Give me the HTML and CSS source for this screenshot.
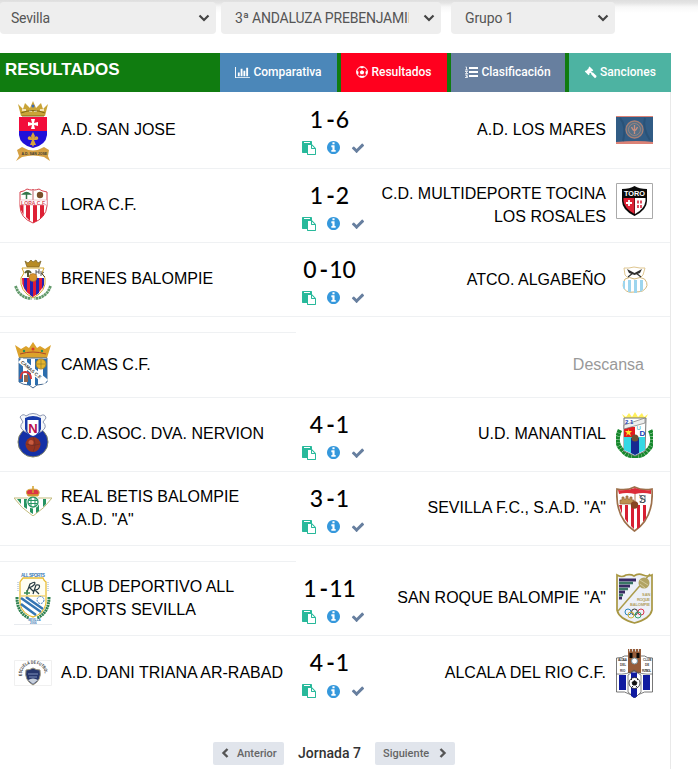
FILE: index.html
```html
<!DOCTYPE html>
<html lang="es">
<head>
<meta charset="utf-8">
<title>Resultados</title>
<link rel="stylesheet" href="styles.css">
</head>
<body>
<svg class="defs" width="0" height="0" aria-hidden="true">
  <symbol id="paste" viewBox="0 0 1792 1792"><path d="M768 1664h896v-640h-416q-40 0-68-28t-28-68v-416h-384v1152zm256-1440v-64q0-13-9.500-22.500t-22.500-9.500h-704q-13 0-22.500 9.500t-9.500 22.500v64q0 13 9.500 22.500t22.500 9.500h704q13 0 22.500-9.500t9.500-22.500zm256 672h299l-299-299v299zm512 128v672q0 40-28 68t-68 28h-960q-40 0-68-28t-28-68v-160h-544q-40 0-68-28t-28-68v-1344q0-40 28-68t68-28h1088q40 0 68 28t28 68v328q21 13 36 28l408 408q28 28 48 76t20 88z"/></symbol>
  <symbol id="info" viewBox="128 128 1536 1536"><path d="M1152 1376v-160q0-14-9-23t-23-9h-96v-512q0-14-9-23t-23-9h-320q-14 0-23 9t-9 23v160q0 14 9 23t23 9h96v320h-96q-14 0-23 9t-9 23v160q0 14 9 23t23 9h448q14 0 23-9t9-23zm-128-896v-160q0-14-9-23t-23-9h-192q-14 0-23 9t-9 23v160q0 14 9 23t23 9h192q14 0 23-9t9-23zm640 416q0 209-103 385.500t-279.500 279.500-385.500 103-385.500-103-279.500-279.500-103-385.500 103-385.500 279.500-279.500 385.500-103 385.500 103 279.500 279.500 103 385.500z"/></symbol>
  <symbol id="check" viewBox="0 0 1792 1792"><path d="M1671 566q0 40-28 68l-724 724-136 136q-28 28-68 28t-68-28l-136-136-362-362q-28-28-28-68t28-68l136-136q28-28 68-28t68 28l294 295 656-657q28-28 68-28t68 28l136 136q28 28 28 68z"/></symbol>
  <symbol id="down" viewBox="0 0 12 8"><path d="M1.500 1.500 6 6l4.500-4.500" fill="none" stroke="currentColor" stroke-width="2.200"/></symbol>
</svg>

<div class="filters">
  <div class="select s1"><span>Sevilla</span><svg><use href="#down"/></svg></div>
  <div class="select s2"><span>3ª ANDALUZA PREBENJAMIN</span><svg><use href="#down"/></svg></div>
  <div class="select s3"><span>Grupo 1</span><svg><use href="#down"/></svg></div>
</div>

<main class="panel">
  <header class="bar">
    <h1>RESULTADOS</h1>
    <nav>
      <a class="tab t1"><svg width="15" height="13" viewBox="0 0 2048 1792"><path d="M640 896v512h-256v-512h256zm384-512v1024h-256v-1024h256zm1024 1152v128h-2048v-1536h128v1408h1920zm-640-896v768h-256v-768h256zm384-384v1152h-256v-1152h256z"/></svg><span>Comparativa</span></a>
      <a class="tab t2"><svg width="12" height="12" viewBox="0 0 24 24"><circle cx="12" cy="12" r="10.800" fill="none" stroke="#fff" stroke-width="2"/><path d="M12 8l4.500 3.300-1.700 5.200H9.200l-1.700-5.200zM7 2l5 3.200L17 2l-5-1zM1 9l4.200 2.500-.8 5.500-2.400-1zM23 9l-4.200 2.500.8 5.500 2.400-1zM7 22l.5-3 4.500 1 4.500-1 .5 3-5 1z"/></svg><span>Resultados</span></a>
      <a class="tab t3"><svg width="13" height="12" viewBox="0 0 13 12"><path d="M4 1h9v2H4zM4 5h9v2H4zM4 9h9v2H4z"/><path d="M.5 1h1v3M0 4h3M0 5.500h2.500L.5 7.500H3M0 9h2.500L1 10.200h1.500v1.300H0" fill="none" stroke="#fff" stroke-width=".8"/></svg><span>Clasificación</span></a>
      <a class="tab t4"><svg width="13" height="13" viewBox="0 0 13 13"><path d="M5.500.5 9.300 4.300 8.400 5.200 7.900 5 7.200 5.800 8.200 6.600 9 6.500 12.600 10.100Q12.500 11.700 11 12.200L7.300 8.500 7.200 7.600 6.300 6.800 5.200 7.800 5.500 8.400 4.600 9.200.8 5.400 1.700 4.500 2.300 4.700 4.900 2 4.700 1.300Z"/></svg><span>Sanciones</span></a>
    </nav>
  </header>

  <section class="results">
    <article class="match first">
      <svg class="crest" width="38" height="64" viewBox="14 98 38 64">
        <path d="M18 104l5 5 2-6 5 5 3-7 3 7 5-5 2 6 5-5-3 12H21z" fill="#c9a437"/><path d="M22 110h4M29 111h3M34 111h3M40 110h4" stroke="#f4e6b5" stroke-width="2"/><path d="M21 113q12-5 24 0M22 116h22" stroke="#806817" fill="none"/><circle cx="33" cy="106" r="1.500" fill="#406bb4"/>
        <path d="M19 117h28v15H19z" fill="#f20d3b"/><path d="M19 131h28v4q-1 10-14 13-13-3-14-13z" fill="#2110d9"/><path d="M31 119h4l-1 4 4-1v4l-4-1 1 4h-4l1-4-4 1v-4l4 1z" fill="#fff"/><path d="M33 132l2 4-1 3q1-4 4-2 1 3-2 3h-2l2 5h-2l-1 2-1-2h-2l2-5h-2q-3 0-2-3 3-2 4 2l-1-3z" fill="#d7a53c"/>
        <path d="M17 150l5-3q11 7 22 0l5 3-1 6 2 5-6-4q-11-3-22 0l-6 4 3-5z" fill="#d5a043"/><text x="21.500" y="155" class="micro" font-size="3.500">A.D. SAN JOSE</text>
      </svg>
      <p class="team">A.D. SAN JOSE</p>
      <div class="center"><strong class="score"><b>1</b><i>-</i><b>6</b></strong><div class="actions"><svg class="paste"><use href="#paste"/></svg><svg class="info"><use href="#info"/></svg><svg class="check"><use href="#check"/></svg></div></div>
      <p class="team away">A.D. LOS MARES</p>
      <svg class="crest" width="37" height="28" viewBox="0 0 37 28"><path d="M0 0h37v28H0z" fill="#315c85"/><path d="M0 0h37v1H0zM0 26q22-2 37 0v2H0z" fill="#dc8276"/><path d="M4 2q7 8 3 23M29 2q-3 10 5 22" stroke="#2a5278" stroke-width="2" fill="none"/><circle cx="18.500" cy="13.500" r="8.500" fill="#587187" stroke="#a77f75" stroke-width="1.300"/><circle cx="18.500" cy="13.500" r="6" fill="none" stroke="#b58b7d" stroke-width=".7"/><path d="M18.500 9v9M15.500 11q3 7 6 0" stroke="#c88e7f" stroke-width="1.300" fill="none"/></svg>
    </article>

    <article class="match">
      <svg class="crest" width="38" height="38" viewBox="14 187 38 38"><path d="M20 192q5-1 7-3 6 2 6 0 0 2 6 0 2 2 8 3v14q-1 12-14 17-13-5-13-17z" fill="#fff" stroke="#d7424e"/><path d="M20 204h3.500v11l-3-6zM26 204h4v17l-4-4zM33 204h4v17l-4 2zM40 204h4v11l-4 4z" fill="#de2035"/><path d="M33 190v10" stroke="#bb6670"/><path d="M26.500 193v6M23 194q3.500-3 7 0z" stroke="#32764a" stroke-width="1.500"/><circle cx="40" cy="195" r="3.200" fill="#79502a"/><path d="M20 200h27v5H20z" fill="#fff" stroke="#e59ba2" stroke-width=".5"/><text x="21" y="204.500" font-size="5" textLength="25" class="micro red">LORA C.F.</text></svg>
      <p class="team">LORA C.F.</p>
      <div class="center"><strong class="score"><b>1</b><i>-</i><b>2</b></strong><div class="actions"><svg class="paste"><use href="#paste"/></svg><svg class="info"><use href="#info"/></svg><svg class="check"><use href="#check"/></svg></div></div>
      <p class="team away">C.D. MULTIDEPORTE TOCINA<br>LOS ROSALES</p>
      <svg class="crest raised" width="37" height="36" viewBox="0 0 37 36"><path d="M.5.500h36v35H.5z" fill="#fff" stroke="#aaa"/><path d="M6 6q8 0 12.500-3Q23 6 31 6v12q0 9-12.500 15Q6 27 6 18z" fill="#090909"/><path d="M7.500 15h11v16Q8 25 7.500 18z" fill="#dd2236"/><path d="M19 15h10.500v3q-1 8-10.500 13z" fill="#fff"/><text x="8" y="13" font-size="8" textLength="21" lengthAdjust="spacingAndGlyphs" class="micro white">TORO</text><path d="M13 17v6M10 20h6" stroke="#fff" stroke-width="1.800"/><path d="M21 19h5M21 23.500h5" stroke="#df5061" stroke-width="3" stroke-dasharray="2 1"/></svg>
    </article>

    <article class="match">
      <svg class="crest" width="38" height="42" viewBox="14 259 38 42"><path d="M25 261l3 2 3-3 2 2 3-2 2 3 3-2-2 6H27z" fill="#b78b25" stroke="#765f25" stroke-width=".7"/><path d="M22 268h22l-2 5 3 5q2 13-12 20-14-7-12-20l3-5z" fill="#fff" stroke="#d3a52b"/><path d="M22 278h22q1 12-11 19-12-7-11-19z" fill="#e21b37"/><path d="M24 278h3v14l-3-5zM30 278h3v19l-3-2zM36 278h3v15l-3 2zM42 278h2v7l-2 4z" fill="#2422b5"/><path d="M25 273q3-4 6 0M28 271v6" stroke="#575930" stroke-width="2" fill="none"/><path d="M36 270v5M39 269v5M36 272h3M41 271v5M41 274l3-2M42 274l3 3" stroke="#333" stroke-width=".8" fill="none"/><circle cx="33" cy="277.500" r="4" fill="#d7942c" stroke="#9b6220" stroke-width=".5"/><path d="M15.500 286q4 12 16 12.500M50.500 286q-4 12-16 12.500" fill="none" stroke="#629a6b" stroke-width="2.800" stroke-dasharray="2.500 .5"/></svg>
      <p class="team">BRENES BALOMPIE</p>
      <div class="center"><strong class="score"><b>0</b><i>-</i><b>10</b></strong><div class="actions"><svg class="paste"><use href="#paste"/></svg><svg class="info"><use href="#info"/></svg><svg class="check"><use href="#check"/></svg></div></div>
      <p class="team away low">ATCO. ALGABEÑO</p>
      <svg class="crest" width="37" height="28" viewBox="616 265 37 28"><path d="M624 267h5l5-1 6 1h5l-2 7-4 4h-10l-4-4z" fill="#fff" stroke="#dfc690"/><path d="M625 278q4-3 9.500 0 6-3 10 0 6 7-2 12-3 1-8 1-6 1-8-1-6-4-1.500-12z" fill="#fff" stroke="#d2b77b"/><path d="M623 280h2v9l-2-2zM628 279h3v12h-3zM634 279h3v13h-3zM640 279h3v10l-3 2z" fill="#9dd5ee"/><path d="M627 268l7.500 4 7.500-4-2 4-5.500 2-5.500-2z" fill="#30302f"/><path d="M633 272l-5 4M636 272l5 4" stroke="#30302f" stroke-width="1.200" fill="none"/></svg>
    </article>

    <div class="spacer"></div>
    <article class="match rest">
      <svg class="crest" width="38" height="48" viewBox="14 341 38 48"><path d="M15 345l6 4 5-3 3 2 4-6 4 6 3-2 5 3 6-4-4 13H19z" fill="#dca22b"/><path d="M20 354q13-4 26 0" stroke="#ae4726" fill="none"/><circle cx="33" cy="349" r="1.500" fill="#d83b2c"/><circle cx="24" cy="351" r="1.200" fill="#23905b"/><circle cx="42" cy="351" r="1.200" fill="#23905b"/><path d="M19 358h28v24q-4 3-10 3l-4 3-4-3q-6 0-10-3z" fill="#fff" stroke="#476a91"/><path d="M19 359h4v23h-4zM27 359h4v26h-4zM35 359h3v26h-3zM43 359h4v23h-4z" fill="#2c6eae"/><path d="M20 360l26 22" stroke="#fff" stroke-width="6"/><text x="20.500" y="363" font-size="4.500" class="micro" transform="rotate(41 21 363)">CAMAS C.F.</text><circle cx="41" cy="364" r="5" fill="#e7b52a" stroke="#9d8031"/><path d="M37 364h8M41 360v8" stroke="#8b762e" stroke-width=".6"/><path d="M20.500 379q0-8 5.500-7 5 1 5 7" stroke="#d3353b" stroke-width="2" fill="none"/><path d="M24 375h4v7h-4z" fill="#97664c"/></svg>
      <p class="team">CAMAS C.F.</p><span class="off">Descansa</span>
    </article>

    <article class="match">
      <svg class="crest" width="38" height="48" viewBox="14 410 38 48"><circle cx="33" cy="441" r="15" fill="#1430a6" stroke="#818467"/><path d="M20 416q3-4 6-1 7-5 14 0 5-3 6 2l-3 4q5 5-1 9-9 7-18 0-6-4-1-9z" fill="#f5f7fa" stroke="#8c97b2"/><path d="M25 417q8-4 16 0v11q-2 6-8 8-6-2-8-8z" fill="#183aa9"/><path d="M27.500 419h11v12q-2 3-5.500 4-3.500-1-5.500-4z" fill="#fff"/><text x="28.300" y="432" font-size="13" font-weight="bold" fill="#b80d4d">N</text><circle cx="33" cy="443.500" r="7.500" fill="#943421"/><circle cx="31" cy="441.500" r="2.500" fill="#c95c40"/><path d="M26 443q7 3 14 0M33 436q4 7 0 15" fill="none" stroke="#622c28" stroke-width=".6"/></svg>
      <p class="team">C.D. ASOC. DVA. NERVION</p>
      <div class="center"><strong class="score"><b>4</b><i>-</i><b>1</b></strong><div class="actions"><svg class="paste"><use href="#paste"/></svg><svg class="info"><use href="#info"/></svg><svg class="check"><use href="#check"/></svg></div></div>
      <p class="team away">U.D. MANANTIAL</p>
      <svg class="crest" width="37" height="48" viewBox="616 411 37 48"><path d="M622 414l4 3 3-4 3 4 3-5 3 5 4-4 2 4 4-3-3 6h-20z" fill="#fff05b"/><path d="M620 430q-6 13 3 21 5 6 12 4.500 7 1.500 12-4.500 9-8 3-21" fill="none" stroke="#16882c" stroke-width="4.500" stroke-dasharray="3 .3"/><path d="M624 418h22l-1 33-10 5-11-5z" fill="#fff" stroke="#777"/><path d="M624 427h11v11h-11z" fill="#e4191e"/><path d="M624 437h21v13l-10 5-11-5z" fill="#35d8e4"/><path d="M631 438h8v15l-4 2-4-2z" fill="#172b91"/><path d="M628 429l1 2h3l-2 2 1 3-3-2-2 2 1-3-2-2h3z" fill="#ffe42c"/><path d="M624 425l21-7v5l-21 6z" fill="#eee" stroke="#777" stroke-width=".7"/><text x="625" y="424" font-size="6" font-weight="bold" fill="#173eb7">2 1</text><text x="636.500" y="430" font-size="6" fill="#18a9c0">U</text><text x="639.500" y="436" font-size="8" font-weight="bold" fill="#173eb7">D</text><circle cx="635" cy="438" r="3.500" fill="#705133"/></svg>
    </article>

    <article class="match">
      <svg class="crest betis" width="38" height="30" viewBox="14 486 38 30"><path d="M14 498h38q-7 10-19 18-12-8-19-18z" fill="#fff" stroke="#c3bb7c"/><path d="M17 499h4v5zM24 499h3v10l-3-2zM30 499h3v15l-3-2zM36 499h3v12l-3 2zM43 499h3v5l-3 3z" fill="#269461"/><circle cx="33" cy="502" r="6.500" fill="#fff"/><circle cx="33" cy="502" r="5" fill="none" stroke="#259363" stroke-width="1.300"/><path d="M29 500.500h8M29 503.500h8M31 498v8M35 498v8" stroke="#259363" fill="none"/><path d="M28 496q-5-7 5-7 9 0 5 7z" fill="#db3446" stroke="#d5b34a"/><path d="M33 486v7M28 495h10" stroke="#d4a12d" stroke-width="1.500"/></svg>
      <p class="team">REAL BETIS BALOMPIE<br>S.A.D. "A"</p>
      <div class="center"><strong class="score"><b>3</b><i>-</i><b>1</b></strong><div class="actions"><svg class="paste"><use href="#paste"/></svg><svg class="info"><use href="#info"/></svg><svg class="check"><use href="#check"/></svg></div></div>
      <p class="team away">SEVILLA F.C., S.A.D. "A"</p>
      <svg class="crest" width="37" height="46" viewBox="616 486 37 46"><path d="M617 489q10 2 17.500-2 8 4 17.500 2 2 29-17.500 42Q615 518 617 489z" fill="#fff" stroke="#9d704b" stroke-width="1.700"/><path d="M618 490q9 1 17-2 8 3 16 2v4q-8-2-16 0-8-2-16 0z" fill="#dc2c39"/><path d="M619 505h3v9zM625 505h3v18l-3-4zM631 505h3v24l-3-3zM637 505h3v22l-3 2zM643 505h3v13l-3 4z" fill="#d71f32"/><path d="M620 504v-4h2v-3h2v2h2v-3h2v3h2v-2h2v3h2v4z" fill="#bc9050" stroke="#95623e" stroke-width=".7"/><text x="639" y="503" font-size="10" fill="#34434b">S</text><path d="M639 495q6 2 1 8M645 495v7" stroke="#34434b" stroke-width=".7" fill="none"/><path d="M635 494v10" stroke="#b17b58"/><circle cx="634.500" cy="505" r="3.700" fill="#874622"/></svg>
    </article>

    <div class="spacer"></div>
    <article class="match">
      <svg class="crest" width="38" height="53" viewBox="14 572 38 53"><path d="M14 624.500h38" stroke="#e8ebef"/><text x="21" y="576.500" font-size="4.500" textLength="24" class="micro blue">ALL SPORTS</text><path d="M17 597q0 16 12 21M49 597q0 16-12 21" fill="none" stroke="#318251" stroke-width="3" stroke-dasharray="2 .6"/><path d="M20 582q2-3 3-4h20q1 3 3 4v21q-2 11-13 14-11-3-13-14z" fill="#fffef2" stroke="#e8bd35" stroke-width="1.300"/><path d="M21 596h24v8q-2 9-12 12-10-3-12-12z" fill="#fff"/><path d="M21 598l20 14M21 604l15 11M26 597l17 12" stroke="#3475b3" stroke-width="2.500"/><path d="M21 596h24" stroke="#e8bd35"/><path d="M27 592l3-8q7-4 4 1-3 3-5 2l5 5M33 594l3-9q5-1 3 3-1 2-4 2l4 4" fill="none" stroke="#263b41" stroke-width="1.200"/><path d="M24 593h6M27 590v5" stroke="#3a8a51" stroke-width="1.500"/><circle cx="40.500" cy="600" r="3.500" fill="#fff" stroke="#3c7bbd" stroke-dasharray="2 1"/><path d="M18 582v9M48 582v9" stroke="#92afcb" stroke-dasharray="1 1"/><text x="28" y="621" font-size="3" class="micro blue">SEVILLA</text><text x="30" y="624" font-size="3" class="micro blue">2006</text></svg>
      <p class="team">CLUB DEPORTIVO ALL<br>SPORTS SEVILLA</p>
      <div class="center"><strong class="score"><b>1</b><i>-</i><b>11</b></strong><div class="actions"><svg class="paste"><use href="#paste"/></svg><svg class="info"><use href="#info"/></svg><svg class="check"><use href="#check"/></svg></div></div>
      <p class="team away">SAN ROQUE BALOMPIE "A"</p>
      <svg class="crest" width="37" height="51" viewBox="616 572 37 51"><path d="M617 574q5 3 9 0 5-1 8 1 4-3 9-1 5 2 9 0v35q-2 9-17.500 13Q619 618 617 609z" fill="#edf0f8" stroke="#a89742" stroke-width="1.700"/><path d="M619 579h17M619 585h11M619 591h6M619 597h3" stroke="#392965" stroke-width="3"/><path d="M619 582h14M619 588h9M619 594h4" stroke="#397565" stroke-width="2.500"/><path d="M618 610l32-37" stroke="#ac9c4b" stroke-width="1.500"/><circle cx="644" cy="582" r="5.500" fill="#b1a363"/><path d="M640 579l8 5M640 583l5 4" stroke="#e1dab3" stroke-width=".7"/><g class="micro gold" font-size="4"><text x="642" y="595">SAN</text><text x="637" y="600" textLength="13">ROQUE</text><text x="630" y="605" textLength="20">BALOMPIE</text></g><g fill="none" stroke-width="1"><circle cx="628" cy="611" r="3" stroke="#2886bc"/><circle cx="634.500" cy="611" r="3" stroke="#333"/><circle cx="641" cy="611" r="3" stroke="#db354a"/><circle cx="631" cy="614" r="3" stroke="#d4b53d"/><circle cx="638" cy="614" r="3" stroke="#32a46b"/></g></svg>
    </article>

    <article class="match last">
      <svg class="crest" width="38" height="26" viewBox="14 660 38 26"><path d="M14.500 660.500h37v25h-37z" fill="#fff" stroke="#f0f0f0"/><path id="arc" d="M22 676C20 659.500 46 659.500 45 676" fill="none"/><text font-size="4.500" font-weight="bold" fill="#333"><textPath href="#arc" textLength="36" lengthAdjust="spacingAndGlyphs">ESCUELA DE FUTBOL</textPath></text><path d="M26 670q4 0 7-2 3 2 7 2 2 10-7 15-9-5-7-15z" fill="#26366c" stroke="#9a947c"/><path d="M28 674h10M29 677h8" stroke="#7f91ba"/><path d="M28 680q5-3 10 0l-5 4z" fill="#c8d0dc"/></svg>
      <p class="team">A.D. DANI TRIANA AR-RABAD</p>
      <div class="center"><strong class="score"><b>4</b><i>-</i><b>1</b></strong><div class="actions"><svg class="paste"><use href="#paste"/></svg><svg class="info"><use href="#info"/></svg><svg class="check"><use href="#check"/></svg></div></div>
      <p class="team away">ALCALA DEL RIO C.F.</p>
      <svg class="crest" width="37" height="49" viewBox="616 648 37 49"><path d="M616.500 657q6 0 8-2h20q2 2 8 2v34h-8l-7 3-3 3-3-3-7-3h-8z" fill="#fff" stroke="#555" stroke-width=".8"/><path d="M619 674h7v15h-7zM643 674h7v15h-7z" fill="#101ba0"/><path d="M628 648h13v24h-13z" fill="#965c39"/><path d="M629.500 648v2.500M632.500 648v2.500M635.500 648v2.500M638.500 648v2.500" stroke="#ddd"/><path d="M629.500 652h3v5h-3zM636.500 652h3v5h-3z" fill="#080808"/><path d="M616 673q12 1 18-4 6 5 19 4" fill="none" stroke="#555" stroke-width=".7"/><path d="M628 674l6-4 7 4v17l-6 6-7-6z" fill="#fff" stroke="#333" stroke-width=".6"/><path d="M631 671.500h6v24l-3 1.500-3-2z" fill="#101ba0"/><circle cx="634.500" cy="660" r="3" fill="#fff" stroke="#7894a1"/><circle cx="634.500" cy="682" r="5.500" fill="#fff" stroke="#222" stroke-width=".8"/><path d="M634.500 679.500l2.500 2-1 2.500h-3l-1-2.500zM631 679l1-1M638 679l-1-1M632 686l1-1M637 686l-1-1" fill="#111" stroke="#111" stroke-width=".9"/><g class="micro" font-size="3"><text x="618" y="660" textLength="9">ALCALA</text><text x="620" y="665">DEL</text><text x="620" y="671">RIO</text><text x="643" y="660">CLUB</text><text x="645" y="665">DE</text><text x="642" y="671" textLength="9">FUTBOL</text></g></svg>
    </article>

    <footer class="pager">
      <a class="page"><svg width="8" height="10" viewBox="0 0 8 10"><path d="M6.500 1 2.500 5l4 4" fill="none" stroke="#555" stroke-width="2.400"/></svg>Anterior</a>
      <strong>Jornada 7</strong>
      <a class="page next">Siguiente<svg width="8" height="10" viewBox="0 0 8 10"><path d="M1.500 1l4 4-4 4" fill="none" stroke="#555" stroke-width="2.400"/></svg></a>
    </footer>
  </section>
</main>
</body>
</html>
```

FILE: styles.css
```css
* { box-sizing: border-box; }
body { margin: 0; width: 698px; height: 769px; overflow: hidden; background: linear-gradient(#dedede 0, #e5e5e5 3px, #f8f8f8 7px, #fff 13px); font-family: "Liberation Sans", Arial, sans-serif; color: #000; }
.defs { display: block; height: 0; }
.filters { display: flex; height: 53px; padding-top: 2px; }
.select { display: flex; align-items: center; justify-content: space-between; height: 32px; border-radius: 4px; background: #eee; color: #555; font: 14px Roboto, sans-serif; letter-spacing: -.2px; padding: 0 6px 0 11px; }
.select span { overflow: hidden; white-space: nowrap; }
.select svg { width: 12px; height: 8px; flex: none; color: #444; }
.s1 { width: 216px; margin-right: 5px; }
.s2 { width: 220px; margin-right: 10px; padding-left: 14px; }
.s2 span { width: 174px; }
.s3 { width: 164px; padding-left: 14px; letter-spacing: -.1px; }
.panel { width: 671px; }
.bar { display: flex; justify-content: space-between; height: 39px; background: #107c10; }
h1 { margin: 0; padding: 7px 0 0 5px; font-size: 17px; line-height: 20px; color: #fff; }
nav { display: flex; gap: 4px; }
.tab { display: flex; align-items: center; justify-content: center; gap: 3px; padding-bottom: 1px; color: #fff; fill: #fff; font: 500 12px Roboto, sans-serif; }
.t1 { width: 117px; background: #4b87b9; }
.t2 { width: 106px; background: #ff001e; }
.t3 { width: 114px; background: #677f9f; }
.t4 { width: 102px; background: #4db3a2; }
.results { height: 677px; border-right: 1px solid #e9e9e9; }
.match { display: grid; grid-template-columns: 38px 246px 72px 246px 37px; align-items: center; height: 74px; padding-left: 14px; border-bottom: 1px solid #eff1f3; }
.match.first { height: 77px; }
.match.last { border-bottom: 0; }
.match.rest { height: 65px; }
.spacer { width: 296px; height: 16px; border-bottom: 1px solid #eff1f3; }
.crest { display: block; }
.crest.betis { margin-bottom: 16px; }
.crest.raised { margin-bottom: 9px; }
.team { margin: 0; padding: 0 0 1.500px 9px; font-size: 16px; line-height: 23px; white-space: nowrap; }
.team.away { padding: 0 10px 1.500px 0; text-align: right; }
.team.low { padding-bottom: 0; }
.off { grid-column: 3 / 5; justify-self: end; margin-right: -28px; color: #999; font-size: 16px; }
.center { display: flex; flex-direction: column; align-items: center; width: 72px; padding-top: 1px; }
.first .center { padding-top: 0; }
.score { display: flex; align-items: center; justify-content: center; height: 28px; margin-right: 9px; font: 500 23px/28px Lato, sans-serif; }
.score b { font-weight: 500; }
.score i { font-style: normal; font-weight: 700; margin: 0 1px 0 3px; }
.actions { display: flex; align-items: center; height: 16px; width: 64px; margin-top: 7px; gap: 11px; }
.paste { width: 14px; height: 14px; fill: #28b99b; }
.info { width: 13px; height: 13px; fill: #3598dc; }
.check { width: 14px; height: 14px; fill: #677f9f; }
.micro { font-family: "Liberation Sans", sans-serif; font-weight: bold; fill: #3c3c39; }
.micro.red { fill: #d74b5a; }
.micro.white { fill: #fff; }
.micro.blue { fill: #3979b4; }
.micro.gold { fill: #b3a163; }
.pager { display: flex; align-items: center; height: 23px; margin: 32px 0 0 213px; }
.page { display: flex; align-items: center; gap: 8px; width: 71px; height: 23px; padding: 0 0 1px 8px; border-radius: 2px; background: #e1e5ec; color: #666; font: 500 11px Roboto, sans-serif; }
.page.next { width: 80px; gap: 10px; }
.pager strong { width: 91px; padding-bottom: 2px; text-align: center; color: #333; font: 500 14px Roboto, sans-serif; }
```
